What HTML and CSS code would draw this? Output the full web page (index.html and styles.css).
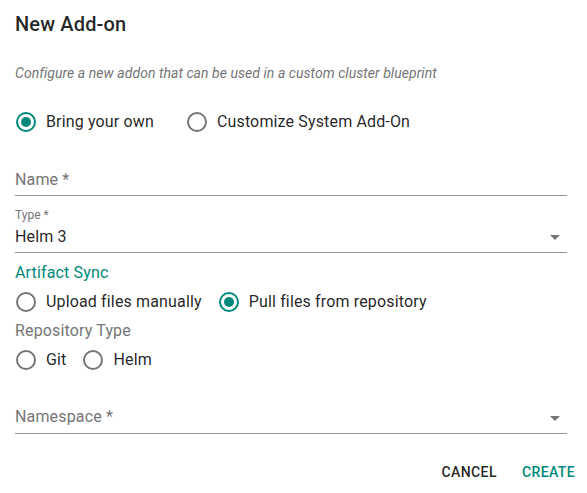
FILE: index.html
```html
<!DOCTYPE html>
<html lang="en">
<head>
<meta charset="utf-8">
<title>New Add-on</title>
<link rel="stylesheet" href="styles.css">
</head>
<body>
<div class="dialog">
  <h1 class="title">New Add-on</h1>
  <p class="subtitle">Configure a new addon that can be used in a custom cluster blueprint</p>

  <div class="radio-row row-top">
    <label class="radio checked">
      <svg viewBox="0 0 24 24" width="24" height="24"><circle cx="12" cy="12" r="9" class="ring"/><circle cx="12" cy="12" r="5" class="dot"/></svg>
      <span>Bring your own</span>
    </label>
    <label class="radio">
      <svg viewBox="0 0 24 24" width="24" height="24"><circle cx="12" cy="12" r="9" class="ring"/></svg>
      <span>Customize System Add-On</span>
    </label>
  </div>

  <div class="field field-empty">
    <span class="placeholder">Name *</span>
  </div>

  <div class="field field-filled">
    <span class="small-label">Type *</span>
    <div class="value-line">
      <span class="value">Helm 3</span>
      <svg class="arrow" viewBox="0 0 24 24" width="24" height="24"><path d="M7 10l5 5 5-5z"/></svg>
    </div>
  </div>

  <div class="section-title">Artifact Sync</div>

  <div class="radio-row row-mid">
    <label class="radio">
      <svg viewBox="0 0 24 24" width="24" height="24"><circle cx="12" cy="12" r="9" class="ring"/></svg>
      <span>Upload files manually</span>
    </label>
    <label class="radio checked">
      <svg viewBox="0 0 24 24" width="24" height="24"><circle cx="12" cy="12" r="9" class="ring"/><circle cx="12" cy="12" r="5" class="dot"/></svg>
      <span>Pull files from repository</span>
    </label>
  </div>

  <div class="group-label">Repository Type</div>

  <div class="radio-row row-mid">
    <label class="radio">
      <svg viewBox="0 0 24 24" width="24" height="24"><circle cx="12" cy="12" r="9" class="ring"/></svg>
      <span>Git</span>
    </label>
    <label class="radio">
      <svg viewBox="0 0 24 24" width="24" height="24"><circle cx="12" cy="12" r="9" class="ring"/></svg>
      <span>Helm</span>
    </label>
  </div>

  <div class="field field-select">
    <span class="placeholder">Namespace *</span>
    <svg class="arrow" viewBox="0 0 24 24" width="24" height="24"><path d="M7 10l5 5 5-5z"/></svg>
  </div>

  <div class="actions">
    <button class="btn btn-cancel">CANCEL</button>
    <button class="btn btn-create">CREATE</button>
  </div>
</div>
</body>
</html>
```

FILE: styles.css
```css
* { box-sizing: border-box; }
html, body {
  margin: 0;
  padding: 0;
  background: #ffffff;
}
body {
  font-family: Roboto, "Liberation Sans", Arial, sans-serif;
  color: rgba(0, 0, 0, 0.87);
  width: 587px;
  height: 493px;
  overflow: hidden;
}
.dialog {
  display: flex;
  flex-direction: column;
  padding: 1px 20px 0 15px;
}
.title {
  margin: 0;
  font-size: 20px;
  font-weight: 500;
  line-height: 46px;
  height: 46px;
  letter-spacing: 0.0075em;
}
.subtitle {
  margin: 16px 0 0 0;
  font-size: 14px;
  font-style: italic;
  line-height: 20px;
  letter-spacing: 0.05px;
  color: #757575;
}
.radio-row {
  display: flex;
  align-items: center;
  height: 30px;
}
.row-top { margin-top: 24px; gap: 31px; }
.row-mid { margin-top: 4px; gap: 15px; }
.radio {
  display: flex;
  align-items: center;
  gap: 8px;
  font-size: 16px;
  line-height: 20px;
  letter-spacing: 0.00938em;
  cursor: pointer;
}
.radio svg {
  flex: none;
  margin-left: -1px;
}
.radio + .radio svg { margin-left: 0; }
.ring {
  fill: none;
  stroke: #757575;
  stroke-width: 2;
}
.checked .ring { stroke: #00897b; }
.dot { fill: #00897b; }
.field {
  border-bottom: 1px solid #949494;
}
.field-empty {
  padding: 33px 0 5px 0;
}
.placeholder {
  font-size: 16px;
  line-height: 20px;
  letter-spacing: 0.00938em;
  color: #757575;
  display: block;
}
.field-filled {
  padding: 12px 0 5px 0;
}
.small-label {
  display: block;
  font-size: 12px;
  line-height: 14px;
  color: #757575;
}
.value-line {
  display: flex;
  align-items: center;
  justify-content: space-between;
  margin-top: 5px;
  height: 20px;
}
.value {
  font-size: 16px;
  line-height: 20px;
  letter-spacing: 0.00938em;
}
.arrow {
  fill: #757575;
  flex: none;
}
.field-select {
  display: flex;
  align-items: center;
  justify-content: space-between;
  padding: 32px 0 6px 0;
  height: 59px;
}
.field-select .arrow { margin-top: 2px; }
.section-title {
  margin-top: 10px;
  font-size: 16px;
  line-height: 20px;
  letter-spacing: 0.00938em;
  color: #00897b;
}
.group-label {
  margin-top: 4px;
  font-size: 16px;
  line-height: 20px;
  letter-spacing: 0.00938em;
  color: #757575;
}
.actions {
  display: flex;
  justify-content: flex-end;
  gap: 25px;
  margin-top: 28px;
  margin-right: -8px;
}
.btn {
  border: none;
  background: none;
  padding: 0;
  font-family: Roboto, "Liberation Sans", Arial, sans-serif;
  font-size: 14px;
  font-weight: 500;
  line-height: 20px;
  letter-spacing: 0.02857em;
  cursor: pointer;
}
.btn-cancel { color: rgba(0, 0, 0, 0.87); }
.btn-create { color: #00897b; }
```
